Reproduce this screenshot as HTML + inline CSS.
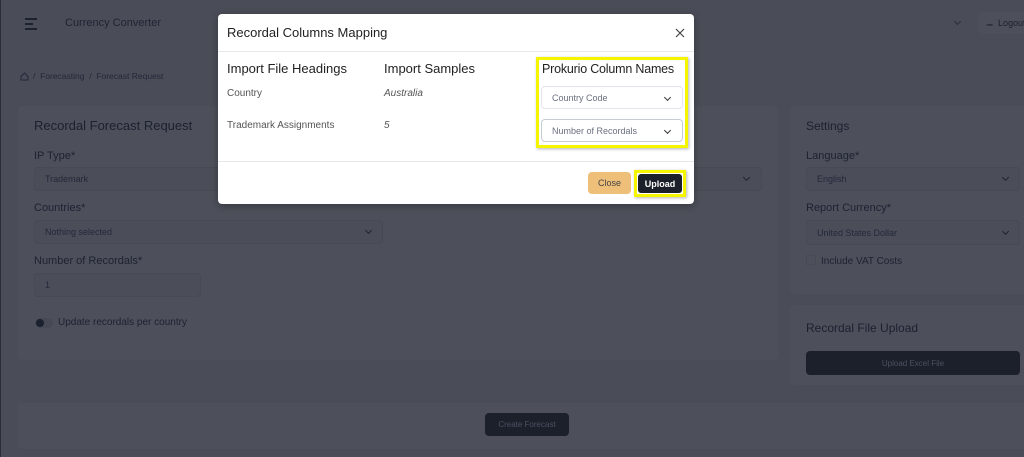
<!DOCTYPE html>
<html><head><meta charset="utf-8"><style>
*{box-sizing:border-box;margin:0;padding:0}
body{width:1024px;height:457px;overflow:hidden;background:#4a4c57;font-family:"Liberation Sans",sans-serif;position:relative;color:#1c2130}
.a{position:absolute}
.card{position:absolute;background:#4d4f5a;border-radius:4px}
.inp{position:absolute;border:1px solid #474955;border-radius:4px;background:#4b4d58;font-size:9px;color:#23283a;padding-left:10px;display:flex;align-items:center}
.lbl{position:absolute;font-size:11px;color:#1d2232}
.chev{position:absolute;width:5px;height:5px;border-right:1.3px solid #1f2433;border-bottom:1.3px solid #1f2433;transform:rotate(45deg)}
.modal{position:absolute;left:218px;top:14px;width:476px;height:190px;background:#fff;border-radius:4px;box-shadow:0 2px 8px rgba(0,0,0,.3)}
.sel{position:absolute;background:#fff;border:1px solid #e3e5ea;border-radius:4px;font-size:9px;color:#6b7080;padding-left:10px;display:flex;align-items:center}
.schev{position:absolute;right:12px;top:8px;width:5px;height:5px;border-right:1.4px solid #333;border-bottom:1.4px solid #333;transform:rotate(45deg)}
</style></head><body>
<div class="a" style="left:0;top:0;width:1px;height:457px;background:#2a2d36"></div>
<div class="a" style="left:25px;top:18px;width:12px;height:2px;background:#1c2130"></div>
<div class="a" style="left:25px;top:23px;width:8px;height:2px;background:#1c2130"></div>
<div class="a" style="left:25px;top:28px;width:12px;height:2px;background:#1c2130"></div>
<div class="a" style="left:65px;top:17px;font-size:11px;color:#1f2433">Currency Converter</div>
<div class="chev" style="left:955px;top:19px;border-color:#2a2f3d"></div>
<div class="a" style="left:978px;top:12px;width:60px;height:22px;background:#4d4f5a;border-radius:6px"></div>
<div class="a" style="left:986px;top:18px;font-size:9px;color:#1c2130">&#x2B72;</div>
<div class="a" style="left:998px;top:18px;font-size:9px;color:#1c2130">Logout</div>
<svg class="a" style="left:20px;top:72px" width="9" height="9" viewBox="0 0 9 9"><path d="M1 4.5L4.5 1 8 4.5V8H1z" fill="none" stroke="#23283a" stroke-width="1"/></svg>
<div class="a" style="left:33px;top:71px;font-size:8.5px;color:#23283a">/ &nbsp;Forecasting &nbsp;/ &nbsp;Forecast Request</div>
<div class="card" style="left:18px;top:106px;width:760px;height:254px"></div>
<div class="a" style="left:34px;top:118px;font-size:13px;color:#1c2130">Recordal Forecast Request</div>
<div class="lbl" style="left:34px;top:150px">IP Type*</div>
<div class="inp" style="left:34px;top:167px;width:728px;height:24px">Trademark</div>
<div class="chev" style="left:744px;top:175px"></div>
<div class="lbl" style="left:34px;top:202px">Countries*</div>
<div class="inp" style="left:34px;top:220px;width:349px;height:24px">Nothing selected</div>
<div class="chev" style="left:366px;top:228px"></div>
<div class="lbl" style="left:34px;top:255px">Number of Recordals*</div>
<div class="inp" style="left:34px;top:273px;width:167px;height:24px">1</div>
<div class="a" style="left:35px;top:318px;width:18px;height:10px;border-radius:5px;background:#474955"></div>
<div class="a" style="left:36px;top:319px;width:8px;height:8px;border-radius:50%;background:#1c2130"></div>
<div class="lbl" style="left:58px;top:317px;font-size:10px">Update recordals per country</div>
<div class="card" style="left:790px;top:106px;width:240px;height:188px"></div>
<div class="a" style="left:806px;top:119px;font-size:12px">Settings</div>
<div class="lbl" style="left:806px;top:150px">Language*</div>
<div class="inp" style="left:806px;top:167px;width:214px;height:24px">English</div>
<div class="chev" style="left:1003px;top:175px"></div>
<div class="lbl" style="left:806px;top:202px">Report Currency*</div>
<div class="inp" style="left:806px;top:220px;width:214px;height:25px">United States Dollar</div>
<div class="chev" style="left:1003px;top:229px"></div>
<div class="a" style="left:806px;top:255px;width:10px;height:10px;border:1px solid #474955;border-radius:2px"></div>
<div class="lbl" style="left:821px;top:256px;font-size:10px">Include VAT Costs</div>
<div class="card" style="left:790px;top:305px;width:240px;height:80px"></div>
<div class="a" style="left:806px;top:321px;font-size:12px">Recordal File Upload</div>
<div class="a" style="left:806px;top:351px;width:214px;height:24px;background:#1b202b;border-radius:4px;font-size:8px;color:#4c5060;display:flex;align-items:center;justify-content:center">Upload Excel File</div>
<div class="card" style="left:18px;top:403px;width:1010px;height:46px"></div>
<div class="a" style="left:485px;top:413px;width:84px;height:23px;background:#1b202b;border-radius:4px;font-size:8px;color:#4c5060;display:flex;align-items:center;justify-content:center">Create Forecast</div>
<div class="modal">
 <div class="a" style="left:9px;top:11px;font-size:13px;color:#222">Recordal Columns Mapping</div>
 <svg class="a" style="left:457px;top:14px" width="10" height="10" viewBox="0 0 10 10"><path d="M1 1L9 9M9 1L1 9" stroke="#444" stroke-width="1.2"/></svg>
 <div class="a" style="left:0;top:37px;width:476px;height:1px;background:#e6e8ec"></div>
 <div class="a" style="left:9px;top:47px;font-size:13px;color:#222">Import File Headings</div>
 <div class="a" style="left:166px;top:47px;font-size:13px;color:#222">Import Samples</div>
 <div class="a" style="left:9px;top:74px;font-size:10px;color:#555">Country</div>
 <div class="a" style="left:166px;top:74px;font-size:10px;color:#555;font-style:italic">Australia</div>
 <div class="a" style="left:9px;top:106px;font-size:10px;color:#555">Trademark Assignments</div>
 <div class="a" style="left:166px;top:106px;font-size:10px;color:#555;font-style:italic">5</div>
 <div class="a" style="left:318px;top:43px;width:152px;height:91px;border:3px solid #f5f500;box-shadow:1px 1px 3px rgba(0,0,0,.3)"></div>
 <div class="a" style="left:324px;top:48px;font-size:12.5px;letter-spacing:-0.2px;color:#222;white-space:nowrap">Prokurio Column Names</div>
 <div class="sel" style="left:323px;top:72px;width:142px;height:23px">Country Code<span class="schev"></span></div>
 <div class="sel" style="left:323px;top:105px;width:142px;height:23px;border-color:#c8ccd4">Number of Recordals<span class="schev"></span></div>
 <div class="a" style="left:0;top:147px;width:476px;height:1px;background:#e6e8ec"></div>
 <div class="a" style="left:370px;top:158px;width:43px;height:22px;background:#eebf78;border-radius:4px;font-size:9px;color:#444;display:flex;align-items:center;justify-content:center">Close</div>
 <div class="a" style="left:416px;top:156px;width:52px;height:27px;border:3px solid #f5f500;box-shadow:1px 1px 3px rgba(0,0,0,.3)"></div>
 <div class="a" style="left:420px;top:160px;width:44px;height:19px;background:#1b202b;border-radius:3px;font-size:9px;font-weight:bold;color:#fff;display:flex;align-items:center;justify-content:center">Upload</div>
</div>
</body></html>
